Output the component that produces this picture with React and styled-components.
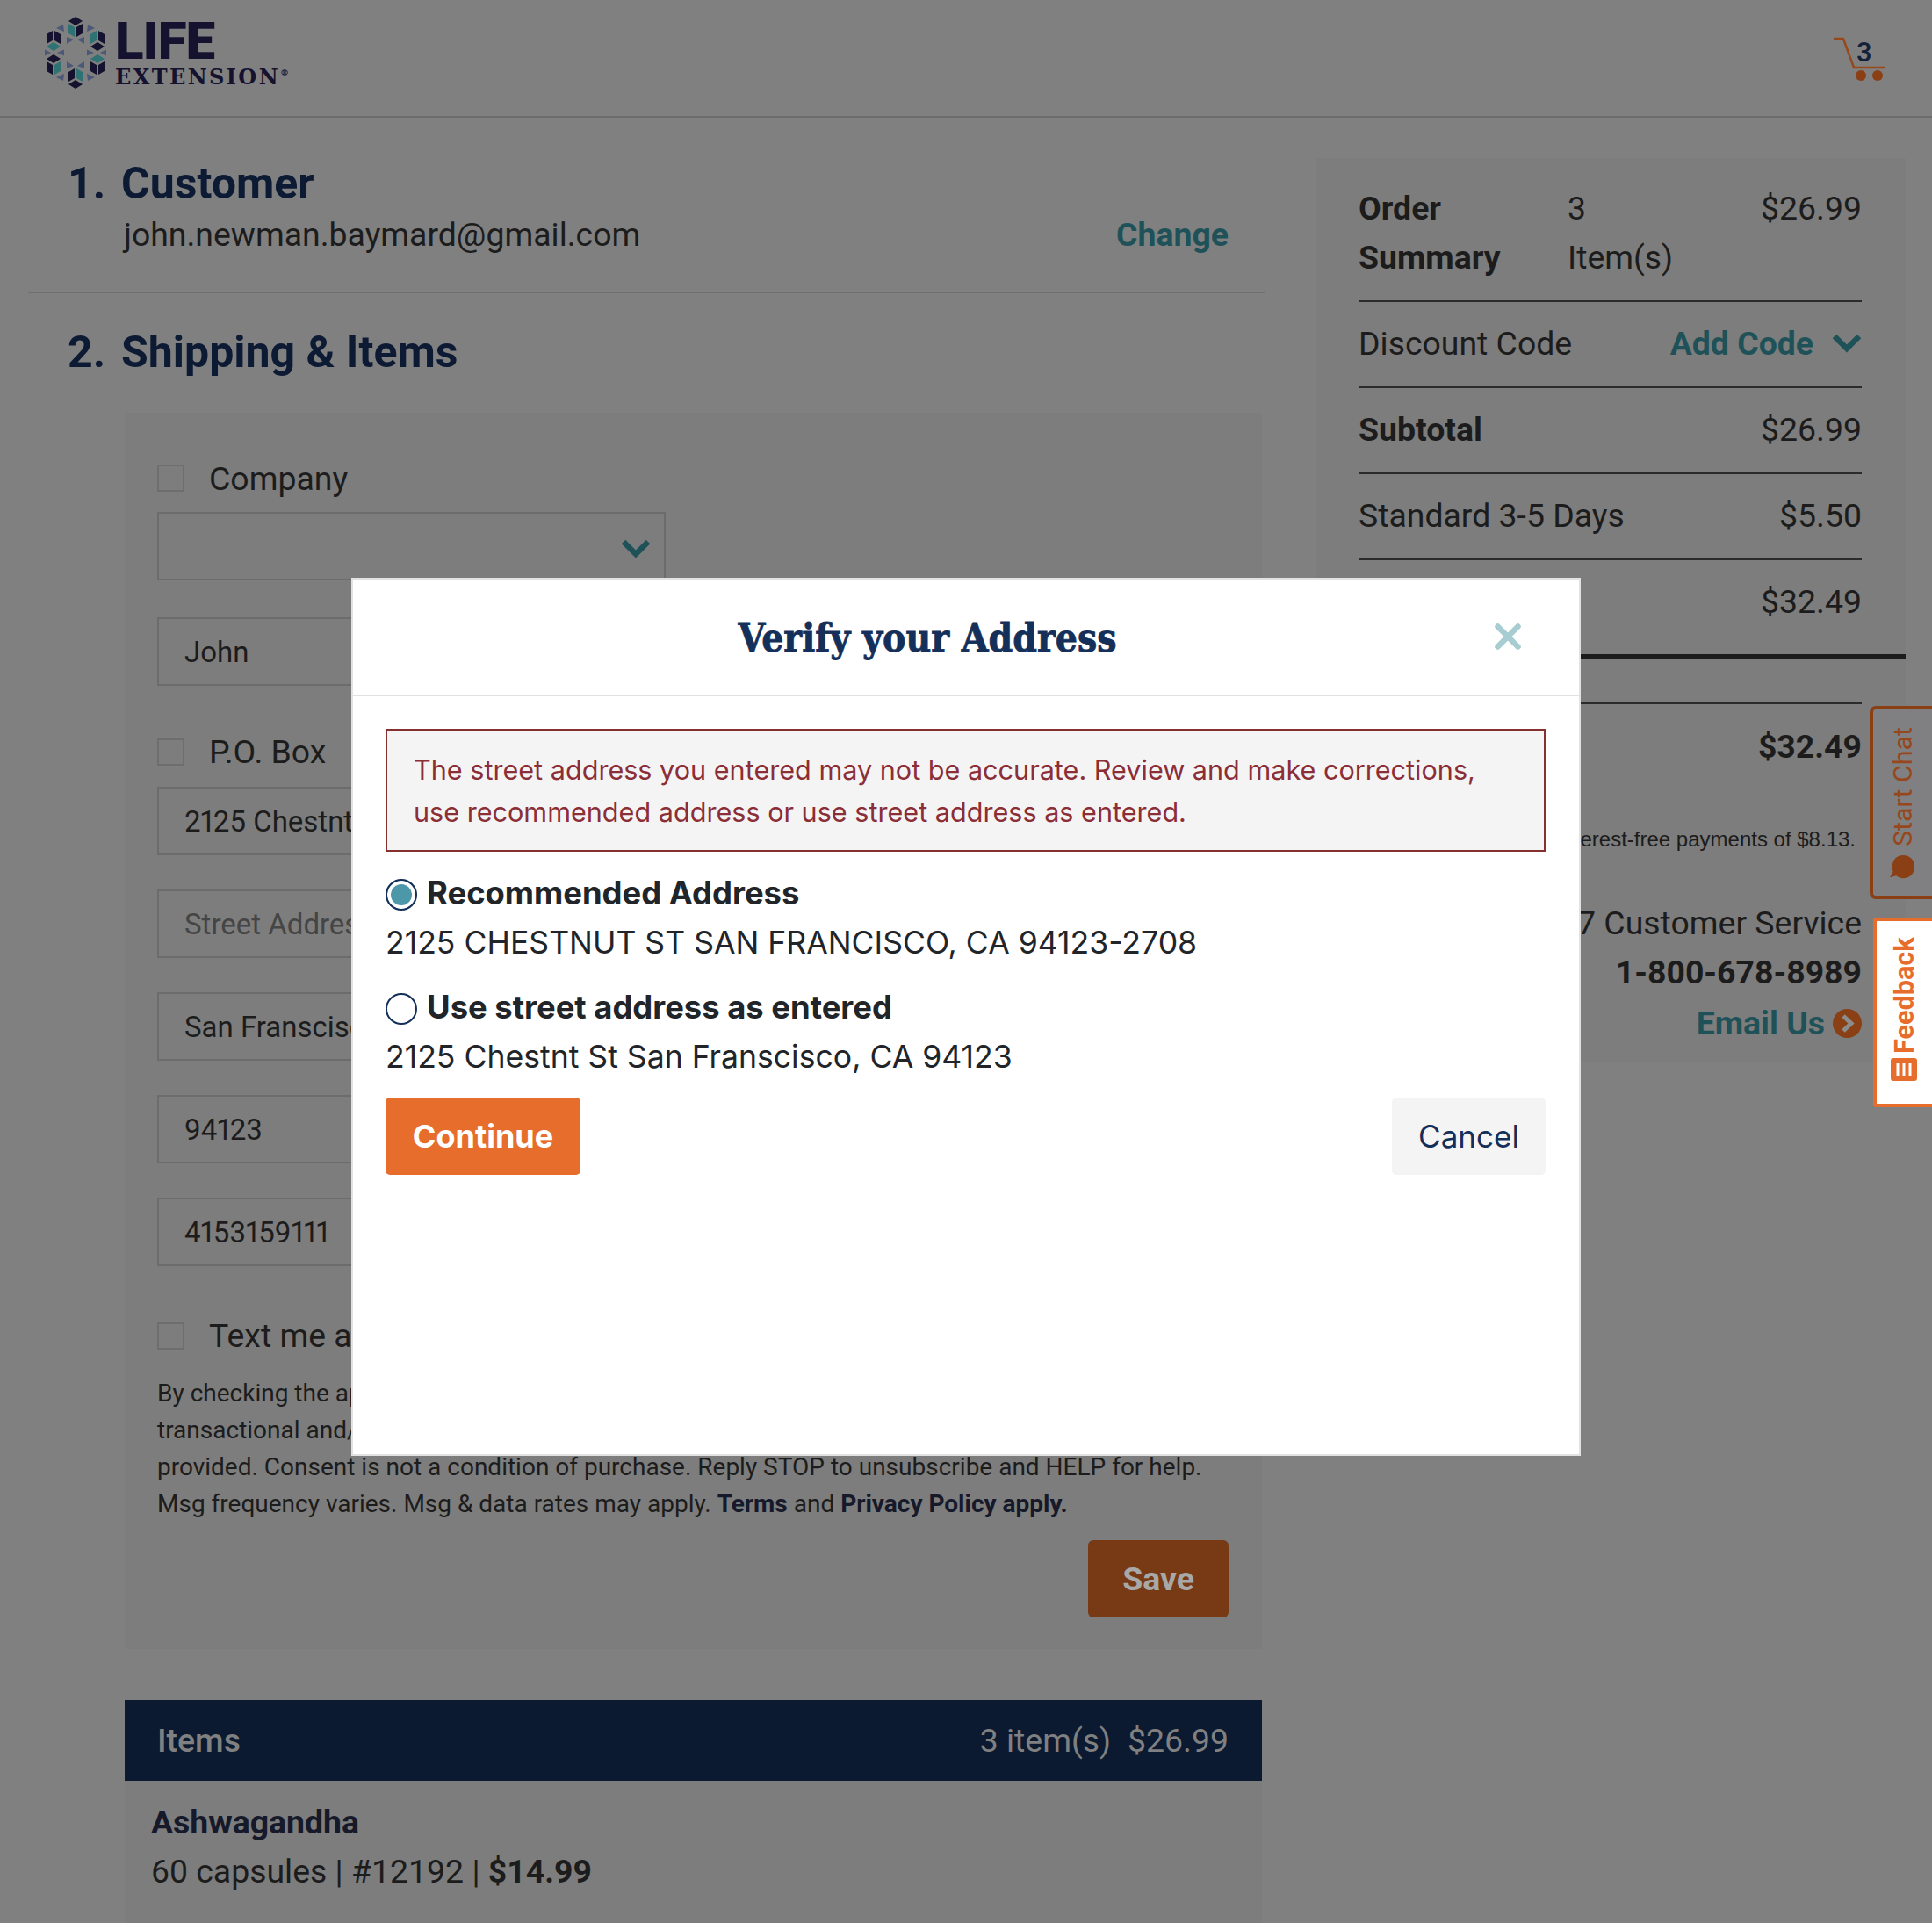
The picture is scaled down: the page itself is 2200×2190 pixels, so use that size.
import React from 'react';
import styled, { createGlobalStyle } from 'styled-components';
import { X } from 'lucide-react';

const GlobalStyle = createGlobalStyle`
    html, body { margin: 0; padding: 0; background: #808080; }
    * { box-sizing: border-box; }
`;

const DARK = '#14122e';
const TEAL = '#2f7273';
const SLATE = '#4c5878';

// the cubes of the logo: place, which end the flat face sits on, and face colours
const CUBES = [
    { x: 0, y: -27, top: true, face: DARK, left: TEAL, right: DARK },
    { x: 25, y: -16, top: false, face: DARK, left: TEAL, right: DARK },
    { x: 25, y: 16, top: true, face: TEAL, left: DARK, right: DARK },
    { x: 0, y: 27, top: false, face: DARK, left: DARK, right: TEAL },
    { x: -25, y: 16, top: true, face: DARK, left: DARK, right: TEAL },
    { x: -25, y: -16, top: false, face: TEAL, left: DARK, right: DARK },
];
const TRIANGLES = [
    '-22,-28 -14,-32 -13,-24', '22,-28 14,-32 13,-24',
    '-35,-3.5 -28,0 -35,3.5', '35,-3.5 28,0 35,3.5',
    '-22,28 -14,32 -13,24', '22,28 14,32 13,24',
    '-13,-3.5 -21,0 -13,3.5', '13,-3.5 21,0 13,3.5',
    '-10,-18 -2,-15 -10,-10', '10,-18 2,-15 10,-10',
    '-10,18 -2,15 -10,10', '10,18 2,15 10,10',
];

function LogoMark() {
    return (
        <svg width="76" height="86" viewBox="-38 -43 76 86">
            {TRIANGLES.map((t) => <polygon key={t} points={t} fill={SLATE} />)}
            {CUBES.map((c) => {
                const fy = c.top ? c.y - 9 : c.y + 9;
                const s = c.top ? 1 : -1;
                return (
                    <g key={`${c.x}${c.y}`}>
                        <polygon points={`${c.x},${fy - 5} ${c.x + 8},${fy} ${c.x},${fy + 5} ${c.x - 8},${fy}`} fill={c.face} />
                        <polygon points={`${c.x - 8},${c.y - 6 * s} ${c.x - 1},${c.y - 2 * s} ${c.x - 1},${c.y + 9 * s} ${c.x - 8},${c.y + 5 * s}`} fill={c.left} />
                        <polygon points={`${c.x + 8},${c.y - 6 * s} ${c.x + 1},${c.y - 2 * s} ${c.x + 1},${c.y + 9 * s} ${c.x + 8},${c.y + 5 * s}`} fill={c.right} />
                    </g>
                );
            })}
        </svg>
    );
}

function Caret() {
    return (
        <svg width="34" height="24" viewBox="0 0 34 24">
            <path d="M3 4L17 18 31 4" fill="none" stroke="#1f5258" strokeWidth="6.5" />
        </svg>
    );
}

function App() {
    return (
        <Page>
            <GlobalStyle />
            <Header>
                <Logo>
                    <LogoMark />
                    <LogoText>
                        <LogoLife>LIFE</LogoLife>
                        <LogoExtension>EXTENSION<sup>®</sup></LogoExtension>
                    </LogoText>
                </Logo>
                <Cart>
                    <svg width="66" height="56" viewBox="0 0 66 56">
                        <path d="M2 2H13L25 35H60" fill="none" stroke="#96481c" strokeWidth="2.5" />
                        <circle cx="33" cy="44" r="6" fill="#8a3f15" />
                        <circle cx="52" cy="44" r="6" fill="#8a3f15" />
                    </svg>
                    <CartCount>3</CartCount>
                </Cart>
            </Header>
            <Content>
                <MainColumn>
                    <CustomerSection>
                        <SectionTitle><span>1.</span>Customer</SectionTitle>
                        <CustomerRow>
                            <span>john.newman.baymard@gmail.com</span>
                            <TealLink>Change</TealLink>
                        </CustomerRow>
                    </CustomerSection>
                    <ShippingTitle><span>2.</span>Shipping &amp; Items</ShippingTitle>
                    <FormPanel>
                        <CheckRow $height={77}><CheckBox />Company</CheckRow>
                        <Field $mb={42}>
                            <Chevron><Caret /></Chevron>
                        </Field>
                        <Field $mb={35}>John</Field>
                        <CheckRow $height={80}><CheckBox />P.O. Box</CheckRow>
                        <Field $mb={39}>2125 Chestnt St</Field>
                        <Field $mb={39} $muted>Street Address 2</Field>
                        <Field $mb={39}>San Franscisco</Field>
                        <Field $mb={39}>94123</Field>
                        <Field $mb={34}>4153159111</Field>
                        <CheckRow $height={90}><CheckBox />Text me about my order</CheckRow>
                        <Consent>
                            By checking the appropriate box, you agree to receive<br />
                            transactional and/or marketing text messages at the number<br />
                            provided. Consent is not a condition of purchase. Reply STOP to unsubscribe and HELP for help.<br />
                            Msg frequency varies. Msg &amp; data rates may apply. <b>Terms</b> and <b>Privacy Policy apply.</b>
                        </Consent>
                        <SaveRow><SaveButton>Save</SaveButton></SaveRow>
                    </FormPanel>
                    <ItemsBar>
                        <ItemsLabel>Items</ItemsLabel>
                        <ItemsTotal><span>3 item(s)</span><span>$26.99</span></ItemsTotal>
                    </ItemsBar>
                    <ItemBlock>
                        <ItemName>Ashwagandha</ItemName>
                        <div>60 capsules | #12192 | <b>$14.99</b></div>
                    </ItemBlock>
                </MainColumn>
                <Sidebar>
                    <SummaryHead>
                        <b>Order<br />Summary</b>
                        <span>3<br />Item(s)</span>
                        <span>$26.99</span>
                    </SummaryHead>
                    <SummaryRow><span>Discount Code</span><AddCode>Add Code <Caret /></AddCode></SummaryRow>
                    <SummaryRow><b>Subtotal</b><span>$26.99</span></SummaryRow>
                    <SummaryRow><span>Standard 3-5 Days</span><span>$5.50</span></SummaryRow>
                    <TotalRow><span>Total</span><span>$32.49</span></TotalRow>
                    <ThickLine />
                    <DueRow><span>Due Today</span><b>$32.49</b></DueRow>
                    <PayNote>Or 4 interest-free payments of $8.13.</PayNote>
                    <Service>
                        <div>24/7 Customer Service</div>
                        <b>1-800-678-8989</b>
                        <EmailLink>
                            Email Us
                            <svg width="33" height="33" viewBox="0 0 33 33">
                                <circle cx="16.5" cy="16.5" r="16.5" fill="#8a3f15" />
                                <path d="M12 8l9 8.5-9 8.5" fill="none" stroke="#8c8c8c" strokeWidth="5" />
                            </svg>
                        </EmailLink>
                    </Service>
                </Sidebar>
            </Content>

            <ChatTab>
                <TabIcon width="30" height="30" viewBox="0 0 32 32">
                    <path d="M15 30C7 30 1 25 1 16S7 2 15 2c3 0 6 1 8 3l8-2-4 7c1 2 1 4 1 6 0 8-5 14-13 14z" fill="#8a3f15" />
                </TabIcon>
                <span>Start Chat</span>
            </ChatTab>
            <FeedbackTab>
                <TabIcon width="30" height="26" viewBox="0 0 30 26">
                    <rect width="30" height="26" rx="3" fill="#e76d2d" />
                    <path d="M8 6v14M15 6v14M22 6v14" stroke="#fff" strokeWidth="3" />
                </TabIcon>
                <span>Feedback</span>
            </FeedbackTab>

            <Modal>
                <ModalHeader>
                    <ModalTitle>Verify your Address</ModalTitle>
                    <CloseButton><X size={46} strokeWidth={3.4} /></CloseButton>
                </ModalHeader>
                <ModalBody>
                    <Alert>
                        The street address you entered may not be accurate. Review and make corrections,
                        use recommended address or use street address as entered.
                    </Alert>
                    <AddressOption>
                        <Radio $checked />
                        <b>Recommended Address</b>
                    </AddressOption>
                    <AddressLine>2125 CHESTNUT ST SAN FRANCISCO, CA 94123-2708</AddressLine>
                    <AddressOption>
                        <Radio />
                        <b>Use street address as entered</b>
                    </AddressOption>
                    <AddressLine>2125 Chestnt St San Franscisco, CA 94123</AddressLine>
                    <ModalActions>
                        <ContinueButton>Continue</ContinueButton>
                        <CancelButton>Cancel</CancelButton>
                    </ModalActions>
                </ModalBody>
            </Modal>
        </Page>
    );
}

export default App;

const Page = styled.div`
    position: relative;
    width: 2200px;
    height: 2190px;
    overflow: hidden;
    background: #808080;
    color: #1c1c1c;
    font-family: Roboto, sans-serif;
    font-size: 37.4px;
`;
const Header = styled.header`
    display: flex;
    justify-content: space-between;
    align-items: center;
    height: 134px;
    padding: 0 48px 0 48px;
    border-bottom: 2px solid #6c6c6c;
`;
const Logo = styled.div`
    display: flex;
    align-items: center;
    gap: 7px;
    margin-bottom: 13px;
`;
const LogoText = styled.div`
    display: flex;
    flex-direction: column;
    margin-top: 5px;
    color: ${DARK};
`;
const LogoLife = styled.div`
    height: 46px;
    font: 900 60px/46px Roboto, sans-serif;
    letter-spacing: -1px;
`;
const LogoExtension = styled.div`
    height: 26px;
    margin-top: 5px;
    font: 700 24px/26px "DejaVu Serif", serif;
    letter-spacing: 2.4px;
    sup { font-size: 10px; letter-spacing: 0; vertical-align: 10px; line-height: 0; }
`;
const Cart = styled.div`
    position: relative;
    width: 66px;
    height: 56px;
    margin-top: 8px;
`;
const CartCount = styled.span`
    position: absolute;
    left: 28px;
    top: 0;
    font: 500 31px/36px Roboto, sans-serif;
    color: #14203a;
`;
const Content = styled.div`
    display: flex;
    padding-left: 32px;
`;
const MainColumn = styled.main`
    width: 1408px;
`;
const CustomerSection = styled.section`
    height: 200px;
    padding: 46px 41px 0 45px;
    border-bottom: 2px solid #6f6f6f;
`;
const SectionTitle = styled.h2`
    margin: 0;
    font-size: 50px;
    line-height: 58px;
    font-weight: 700;
    color: #0c1a33;
    span { display: inline-block; width: 61px; }
`;
const ShippingTitle = styled(SectionTitle)`
    margin: 38px 0 0 45px;
    height: 98px;
`;
const CustomerRow = styled.div`
    display: flex;
    justify-content: space-between;
    align-items: center;
    margin: 0 0 0 64px;
    line-height: 58px;
`;
const TealLink = styled.span`
    font-weight: 700;
    color: #1f5258;
`;
const FormPanel = styled.section`
    margin-left: 110px;
    width: 1295px;
    height: 1408px;
    padding: 36px 38px 0 37px;
    background: #7d7d7d;
`;
const CheckRow = styled.div`
    display: flex;
    align-items: center;
    gap: 28px;
    height: ${(p) => p.$height}px;
`;
const CheckBox = styled.span`
    width: 31px;
    height: 31px;
    border: 2px solid #6e6e6e;
`;
const Field = styled.div`
    position: relative;
    display: flex;
    align-items: center;
    width: 579px;
    height: 78px;
    margin-bottom: ${(p) => p.$mb}px;
    padding-left: 29px;
    border: 2px solid #6c6c6c;
    color: ${(p) => (p.$muted ? '#454545' : '#1c1c1c')};
    font-size: 33px;
    font-variant-numeric: proportional-nums;
`;
const Chevron = styled.span`
    position: absolute;
    right: 15px;
    top: 28px;
    display: flex;
`;
const Consent = styled.p`
    margin: 0;
    font-size: 28px;
    line-height: 42px;
    white-space: nowrap;
    b { font-weight: 700; color: #15192a; }
`;
const SaveRow = styled.div`
    display: flex;
    justify-content: flex-end;
    margin-top: 20px;
`;
const SaveButton = styled.button`
    width: 160px;
    height: 88px;
    border: 0;
    border-radius: 6px;
    background: #783a14;
    color: #a8a8a8;
    font: 700 37.4px Roboto, sans-serif;
`;
const ItemsBar = styled.div`
    display: flex;
    justify-content: space-between;
    align-items: center;
    width: 1295px;
    height: 92px;
    margin: 58px 0 0 110px;
    padding: 0 38px 0 37px;
    background: #0b1a30;
    color: #808080;
`;
const ItemsLabel = styled.span`
    font-weight: 500;
`;
const ItemsTotal = styled.div`
    display: flex;
    gap: 19px;
`;
const ItemBlock = styled.div`
    width: 1295px;
    height: 200px;
    margin-left: 110px;
    padding: 19px 30px;
    background: #7d7d7d;
    line-height: 56px;
`;
const ItemName = styled.div`
    font-weight: 700;
    color: #15192a;
`;
const Sidebar = styled.aside`
    width: 672px;
    height: 1030px;
    margin: 46px 0 0 58px;
    padding: 29px 50px 0 49px;
    background: #7d7d7d;
    line-height: 56px;
`;
const SummaryRow = styled.div`
    display: flex;
    justify-content: space-between;
    align-items: center;
    height: 98px;
    padding-bottom: 2px;
    border-bottom: 2px solid #2b2b2b;
`;
const SummaryHead = styled.div`
    display: grid;
    grid-template-columns: 238px 1fr auto;
    height: 135px;
    border-bottom: 2px solid #2b2b2b;
`;
const AddCode = styled.span`
    display: flex;
    align-items: center;
    gap: 21px;
    color: #1f5258;
    font-weight: 700;
`;
const TotalRow = styled.div`
    display: flex;
    justify-content: space-between;
    align-items: center;
    height: 107px;
    padding-bottom: 14px;
`;
const ThickLine = styled.div`
    height: 5px;
    margin-right: -50px;
    background: #1c1c1c;
`;
const DueRow = styled.div`
    display: flex;
    justify-content: space-between;
    align-items: center;
    height: 100px;
    padding-bottom: 3px;
    margin-top: 50px;
    border-top: 2px solid #2b2b2b;
`;
const PayNote = styled.div`
    margin-top: 38px;
    padding-right: 7px;
    text-align: right;
    font: 24px/36px "Liberation Sans", sans-serif;
`;
const Service = styled.div`
    margin-top: 49px;
    text-align: right;
`;
const EmailLink = styled.div`
    display: flex;
    justify-content: flex-end;
    align-items: center;
    gap: 9px;
    margin-top: 2px;
    color: #1f5258;
    font-weight: 700;
`;
const TabIcon = styled.svg`
    flex: none;
`;
const ChatTab = styled.div`
    position: absolute;
    left: 2129px;
    top: 804px;
    display: flex;
    align-items: center;
    gap: 8px;
    width: 71px;
    height: 220px;
    padding: 18px 0 14px;
    border: 4px solid #8a3f15;
    border-left: 0;
    border-radius: 0 7px 7px 0;
    background: #808083;
    color: #96481c;
    font-size: 30.4px;
    white-space: nowrap;
    writing-mode: vertical-rl;
    transform: rotate(180deg);
`;
const FeedbackTab = styled.div`
    position: absolute;
    left: 2133px;
    top: 1045px;
    display: flex;
    align-items: center;
    gap: 5px;
    width: 67px;
    height: 216px;
    padding: 26px 0 0;
    border: 4px solid #e76d2d;
    border-left: 0;
    border-radius: 0 4px 4px 0;
    background: #fff;
    color: #e76d2d;
    font: 700 30.6px Roboto, sans-serif;
    white-space: nowrap;
    writing-mode: vertical-rl;
    transform: rotate(180deg);
`;
const Modal = styled.div`
    position: absolute;
    left: 400px;
    top: 658px;
    width: 1400px;
    height: 1000px;
    background: #fff;
    border: 2px solid #e2e2e2;
    font-family: Inter, sans-serif;
    color: #212529;
`;
const ModalHeader = styled.div`
    position: relative;
    display: flex;
    justify-content: center;
    align-items: center;
    height: 133px;
    border-bottom: 2px solid #e2e2e2;
`;
const ModalTitle = styled.h2`
    margin: 1px 88px 0 0;
    font: 700 44px "DejaVu Serif Condensed", "DejaVu Serif", serif;
    -webkit-text-stroke: 0.8px #14305a;
    color: #14305a;
`;
const CloseButton = styled.span`
    position: absolute;
    right: 58px;
    top: 42px;
    display: flex;
    color: #a7cdd2;
`;
const ModalBody = styled.div`
    padding: 37px 38px 38px 37px;
`;
const Alert = styled.div`
    height: 140px;
    padding: 21px 30px;
    border: 2px solid #86302f;
    background: #f5f4f5;
    color: #8b2e35;
    font-size: 30.6px;
    line-height: 48px;
    margin-bottom: 22px;
`;
const AddressOption = styled.div`
    display: flex;
    align-items: center;
    gap: 11px;
    height: 50px;
    font-size: 36.4px;
    b { font-weight: 700; }
`;
const Radio = styled.span`
    width: 36px;
    height: 36px;
    border-radius: 50%;
    border: 2px solid #14305a;
    background: ${(p) => (p.$checked ? '#4c97a8' : '#fff')};
    box-shadow: ${(p) => (p.$checked ? 'inset 0 0 0 4px #fff' : 'none')};
    margin-top: 4px;
`;
const AddressLine = styled.div`
    height: 80px;
    padding: 7px 0 0;
    font-size: 35.6px;
    line-height: 50px;
`;
const ModalActions = styled.div`
    display: flex;
    justify-content: space-between;
    margin-top: -2px;
`;
const ContinueButton = styled.button`
    width: 222px;
    height: 88px;
    border: 0;
    border-radius: 5px;
    background: #e76d2d;
    color: #fff;
    font: 700 36px Inter, sans-serif;
`;
const CancelButton = styled.button`
    width: 175px;
    height: 88px;
    border: 0;
    border-radius: 5px;
    background: #f4f4f5;
    color: #14305a;
    font: 400 35px Inter, sans-serif;
`;
